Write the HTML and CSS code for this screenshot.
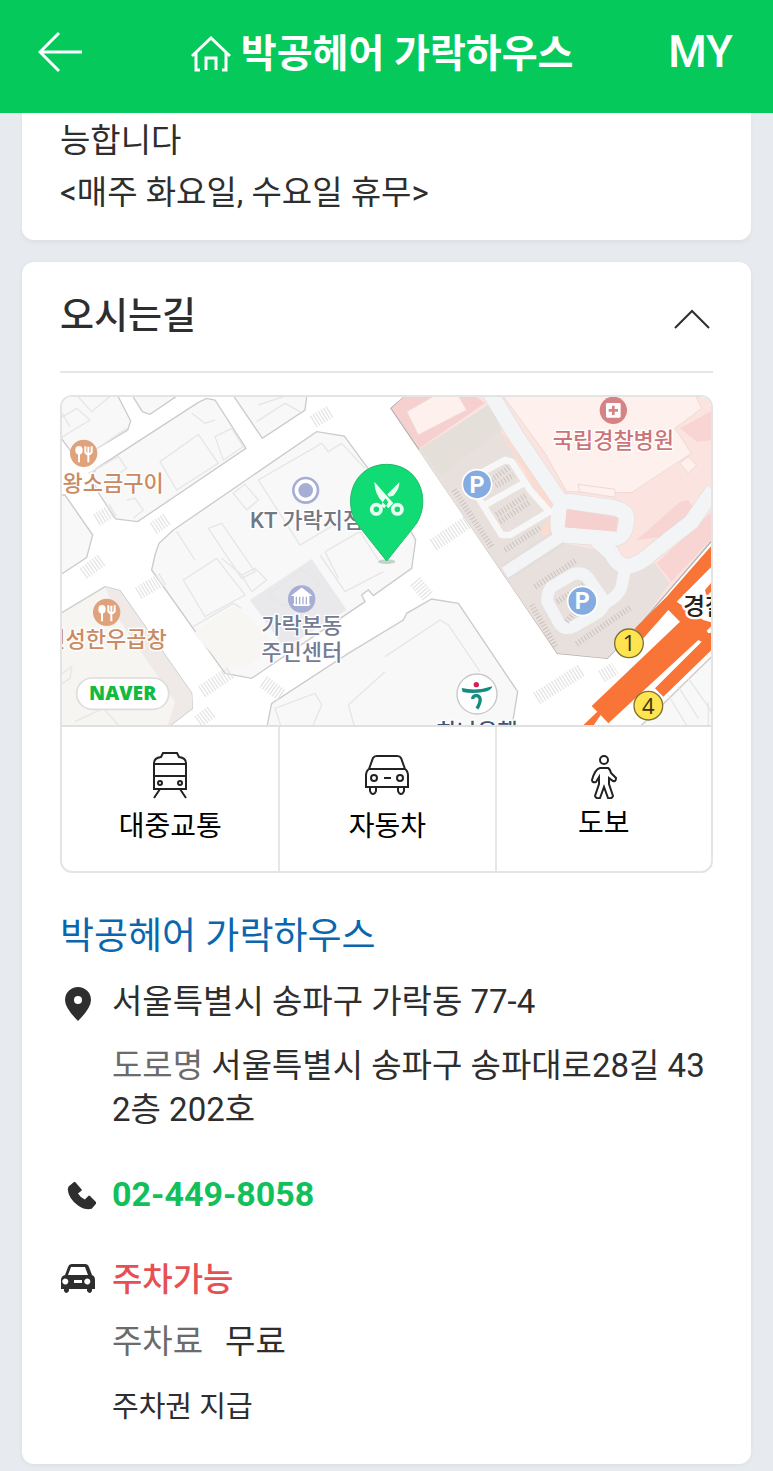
FILE: index.html
```html
<!DOCTYPE html>
<html lang="ko">
<head>
<meta charset="utf-8">
<meta name="viewport" content="width=device-width, initial-scale=1">
<title>박공헤어 가락하우스</title>
<link rel="stylesheet" href="styles.css">
</head>
<body>
<header class="topbar">
  <button class="back" type="button" aria-label="뒤로">
    <svg width="46" height="42" viewBox="0 0 46 42"><path d="M21 2 2 21l19 19M2 21h42"/></svg>
  </button>
  <h1 class="shop-title">
    <svg width="40" height="36" viewBox="0 0 40 36"><path d="M1 20 20 2l19 18M5 17v17h4M35 17v17h-4M15 34V22h10v12"/></svg>
    <span>박공헤어 가락하우스</span>
  </h1>
  <a class="my" href="#my">MY</a>
</header>

<main class="page">
  <section class="card notice">
    <p>능합니다</p>
    <p>&lt;매주 화요일, 수요일 휴무&gt;</p>
  </section>

  <section class="card location">
    <div class="section-head">
      <h2>오시는길</h2>
      <button class="fold" type="button" aria-label="접기">
        <svg width="36" height="20" viewBox="0 0 36 20"><path d="M1 19 18 2l17 17"/></svg>
      </button>
    </div>

    <div class="map-box">
      <svg class="map" viewBox="21 36 1947 984" preserveAspectRatio="xMidYMid slice" role="img" aria-label="지도">
        <rect class="road" x="0" y="0" width="2000" height="1050"/>
        <g class="block">
          <path d="M0 20H182L227 108L218 135L110 200L75 235L0 135Z"/>
          <path d="M225 20L262 80L285 88L385 20Z"/>
          <path d="M110 270L125 250L430 52L455 40L480 45L573 190L248 410L182 402L125 315Z"/>
          <path d="M527 20L622 160L750 75L757 20Z"/>
          <path d="M0 330H30L113 450L95 518L0 580Z"/>
          <path d="M290 555L300 510L312 475L355 435L785 140L868 153L935 245L1060 425L1082 465L1070 550L955 632L940 615L920 630L930 650L590 880L510 865Z"/>
          <path d="M635 1030L650 955L880 805L1045 705L1055 685L1130 642L1210 655L1388 920L1370 1030Z"/>
          <path d="M1750 1030L1975 810V1030Z"/>
        </g>
        <path class="block warm" d="M0 695L150 605L195 617L410 925L412 970L335 1030H0Z"/>
        <path class="warm-side" d="M150 605L195 617L410 925L412 970L335 1030L360 950L190 700Z"/>
        <path class="warm-fill" d="M415 745L540 660L620 735L665 790L560 850L510 850Z"/>
        <path class="hall-shade" d="M585 645L770 522L875 675L690 790Z"/>
        <g class="lines">
          <path d="M15 100L65 70L105 105L15 160M65 30L110 80L170 30M120 195L215 130M15 75L45 125M100 265L190 215L215 250L150 295M215 345L240 340L265 375L235 400M315 230L430 148L490 235L365 315ZM410 85L450 115L480 105M480 155L530 130L565 185L505 225ZM605 110L690 55L735 80M610 60L700 30M535 325L570 298L610 345L575 375ZM610 285L800 175L820 200L860 175L930 250M610 285L735 480L920 370M460 430L500 415L600 560L560 580ZM365 440L420 525M810 500L915 440L970 525"/>
          <path d="M385 585L485 520L570 630L450 695ZM500 520L560 570L600 550L635 585L590 620L560 570M415 725L535 655L560 670M640 630L740 550L795 600L690 665ZM795 510L870 620L985 560M810 500L850 580M680 1030L660 970L780 925L800 960L770 1030M900 1030L880 960L990 860M15 870L50 845L45 880L15 900M60 1010L145 970L190 1020M990 815L1155 705L1180 720L1275 860"/>
          <path d="M1840 930L1900 1030M1900 880L1970 980M1870 905L1930 1000M1960 950V1030"/>
        </g>

        <g transform="translate(1185 165)">
          <path class="hospital" d="M-177 -95L-120 -145H800V285L560 565L472 655L322 640Z"/>
          <path class="lot" d="M-95 30L120 -105L155 -25L215 90L300 210L300 300L440 330L520 400L615 370L660 430L560 565L472 655L322 640Z"/>
          <path class="greige" d="M-92 28L118 -108L155 -30L-28 106Z"/>
          <path class="rose" d="M-175 -95L-122 -145H60L105 -110L-92 25Z"/>
          <path class="pale" d="M-130 -85L-30 -142H20L50 -90L-95 -15Z"/>
          <path class="pale" d="M150 -145H730L755 -95L675 -35L724 40L545 158L350 155L285 40Z"/>
          <path class="rose-soft" d="M690 -35L790 -90V0L740 5ZM560 300L690 185L715 180L740 215L640 290ZM620 370L790 210V290L665 425Z"/>
          <path class="peach" d="M150 -25L245 55L320 180L300 205L270 170ZM270 270L300 230L310 290L285 300Z"/>
          <path class="pale" d="M385 133L495 148V172L388 155ZM690 70L715 50L740 75L715 100Z"/>
          <g class="street-edge">
            <path d="M115 -150L200 -10L335 190M790 150L725 245L610 335Q570 375 530 380Q500 375 485 340L440 300M165 398L330 290"/>
            <path d="M325 235Q325 182 360 185L490 203Q532 212 530 240Q525 295 490 295L345 285Q320 280 325 235Z"/>
          </g>
          <g class="street">
            <path d="M115 -150L200 -10L335 190M790 150L725 245L610 335Q570 375 530 380Q500 375 485 340L440 300"/>
            <path d="M325 235Q325 182 360 185L490 203Q532 212 530 240Q525 295 490 295L345 285Q320 280 325 235Z"/>
          </g>
          <path class="path" d="M165 398L330 290M525 385L515 440Q505 470 465 490"/>
          <path class="path" d="M305 440L370 402Q400 395 415 415L460 480Q465 505 440 520L370 560Q340 575 325 545L292 485Q290 455 305 440Z"/>
          <path class="rose" d="M350 207L503 232L500 275L344 262Z"/>
          <path class="lane" d="M80 165L155 285L180 285L298 215L240 150L185 65L165 60L90 100M105 195L220 130"/>
          <path class="bays" d="M125 120L180 80M138 137L190 105M140 225L230 165M150 245L240 185M165 330L275 260"/>
          <path class="bays" d="M12 150L125 320M255 440L380 360M245 495L320 625M380 612L545 500M322 485L400 435M350 545L375 515"/>
        </g>

        <g class="crossing">
          <path d="M125 405L175 375M295 430L340 400M775 110L825 80"/>
          <path d="M85 565L140 525M250 625L325 580M440 920L530 860M625 890L680 930M430 1010L470 980"/>
          <path d="M1135 480L1240 410M1080 590L1120 635M1445 940L1580 855M1640 875L1680 850"/>
        </g>

        <g transform="translate(1185 165)" class="subway">
          <path d="M795 305L650 470L555 565L580 595L655 510L690 545L425 798L442 815L390 865H425L452 825L475 850L745 600L755 605L615 745L640 770L795 620V575L775 580L770 572L795 548Z"/>
          <path class="white" d="M680 485L795 370V550L760 540Z"/>
          <path d="M765 450L795 415V490H775Z"/>
        </g>

        <g class="food"><circle cx="86" cy="205" r="41"/><path d="M72 205V232M100 185V232M91 184V202Q100 215 110 202V184"/><ellipse cx="72" cy="196" rx="11" ry="13"/></g>
        <g class="food" transform="translate(69 477)"><circle cx="86" cy="205" r="41"/><path d="M72 205V232M100 185V232M91 184V202Q100 215 110 202V184"/><ellipse cx="72" cy="196" rx="11" ry="13"/></g>
        <g class="place"><circle class="ring" cx="752" cy="316" r="37"/><circle cx="752" cy="316" r="22"/><circle cx="740" cy="642" r="41"/><path class="hall" d="M740 610L767 631H713ZM719 632H761V661H719ZM714 658H766"/><path class="columns" d="M724 635V658M734 635V658M744 635V658M754 635V658"/></g>
        <g class="cross"><circle cx="1675" cy="76" r="41"/><rect x="1653" y="54" width="44" height="44" rx="4"/><path d="M1675 62V90M1661 76H1689"/></g>

        <g class="label">
          <text class="brown" x="-38" y="317">왕왕소금구이</text>
          <text class="brown" x="-29" y="786">신성한우곱창</text>
          <text class="slate" x="585" y="430">KT 가락지점</text>
          <text class="navy" x="619" y="744">가락본동</text>
          <text class="navy" x="619" y="825">주민센터</text>
          <text class="red" x="1493" y="190">국립경찰병원</text>
          <text class="bank" x="1145" y="1062">하나은행</text>
          <text class="station" x="1884" y="690">경찰병원</text>
        </g>

        <g class="parking"><circle cx="1266" cy="298" r="44"/><text x="1266" y="323">P</text><circle cx="1582" cy="648" r="44"/><text x="1582" y="673">P</text></g>
        <g class="exit"><circle cx="1722" cy="775" r="43"/><text x="1722" y="799">1</text><circle cx="1780" cy="962" r="43"/><text x="1780" y="986">4</text></g>
        <g class="bank-logo" transform="translate(1125 825)"><circle cx="141" cy="102" r="60"/><path d="M95 84Q140 95 187 79Q184 93 160 96Q125 102 98 96Z"/><path class="hook" d="M128 117Q128 106 141 107Q160 112 141 146"/><circle class="dot" cx="139" cy="74" r="8"/></g>
        <g class="naver"><rect x="65" y="879" width="276" height="94" rx="47"/><text x="203" y="946">NAVER</text></g>

        <g transform="translate(855 210)">
          <ellipse class="pin-shadow" cx="140" cy="320" rx="26" ry="7"/>
          <path class="pin" d="M140 318L50 205C5 130 45 28 140 28S275 130 230 205Z"/>
          <g class="scissors"><path class="blade" d="M103 80L160 145L145 160L128 142Q104 118 103 80ZM178 82Q180 100 160 122L147 125L142 118ZM136 130L122 152L133 160L145 142Z"/><circle cx="109" cy="163" r="14"/><circle cx="172" cy="163" r="14"/></g>
        </g>
      </svg>

      <nav class="routes" aria-label="길찾기">
        <a href="#transit">
          <svg width="48" height="48" viewBox="0 0 48 48"><path d="M17 2h14l2 4q7 1 7 6v26H8V12q0-5 7-6ZM8 13h32M8 25h32M14 38 8 47M34 38l6 9"/><circle cx="14" cy="32" r="2"/><circle cx="34" cy="32" r="2"/></svg>
          <span>대중교통</span>
        </a>
        <a href="#car">
          <svg width="48" height="48" viewBox="0 0 48 48"><path d="M6 18 10 7q1-2 4-2h20q3 0 4 2l4 11M6 18h36q3 2 3 7v11H3V25q0-5 3-7ZM7 37v3q1 3 3 3t3-3v-3M35 37v3q1 3 3 3t3-3v-3M21 27h7"/><circle cx="11" cy="27" r="3"/><circle cx="37" cy="27" r="3"/></svg>
          <span>자동차</span>
        </a>
        <a class="walk" href="#walk">
          <svg width="48" height="48" viewBox="0 0 48 48"><circle cx="24" cy="9" r="4"/><path d="M20 17h8q2 1 3 5l5 5q0 4-3 3l-4-3v6l4 12q-1 3-5 2l-4-11-4 11q-4 1-5-2l4-12v-7l-3 5q-4 1-4-2 3-11 8-12Z"/></svg>
          <span>도보</span>
        </a>
      </nav>
    </div>

    <h3 class="name"><a href="#shop">박공헤어 가락하우스</a></h3>

    <div class="info address">
      <svg class="glyph" width="36" height="36" viewBox="0 0 36 36"><path fill-rule="evenodd" d="M18 1a13 13 0 0 1 13 13q0 8-13 21Q5 22 5 14A13 13 0 0 1 18 1Zm0 9a4 4 0 1 0 0 8 4 4 0 0 0 0-8Z"/></svg>
      <div>
        <p>서울특별시 송파구 가락동 77-4</p>
        <p class="road-address"><span class="muted">도로명</span> 서울특별시 송파구 송파대로28길 43 2층 202호</p>
      </div>
    </div>

    <div class="info phone">
      <svg class="glyph" width="36" height="36" viewBox="0 0 42 36"><path d="M10 7 16 2q1-1 2 0l7 8q1 1 0 2l-4 3q3 5 8 7l4-4q1-1 2 0l7 7q1 1 0 2l-5 6q-7 2-16-4Q10 21 9 10Z"/></svg>
      <a href="tel:024498058">02-449-8058</a>
    </div>

    <div class="info parking-info">
      <svg class="glyph" width="36" height="36" viewBox="0 0 36 36"><path fill-rule="evenodd" d="M5 14 8 6q1-3 4-3h13q3 0 4 3l3 8q3 1 3 5v9h-3v2q-2 4-5 0v-2H9v2q-3 4-5 0v-2H1v-9q0-4 4-5Zm6-8-3 8h20l-3-8ZM7 18a3 3 0 1 0 0 5 3 3 0 0 0 0-5Zm22 0a3 3 0 1 0 0 5 3 3 0 0 0 0-5ZM14 19v3h8v-3Z"/></svg>
      <div>
        <p class="available">주차가능</p>
        <p class="fee"><span class="muted">주차료</span><span>무료</span></p>
        <p class="ticket">주차권 지급</p>
      </div>
    </div>
  </section>
</main>
</body>
</html>
```

FILE: styles.css
```css
* { box-sizing: border-box; }

body {
  margin: 0;
  background: #e7ebef;
  color: #2e2e2e;
  font-family: Roboto, "Noto Sans CJK KR", sans-serif;
  font-size: 33px;
  line-height: 44px;
}

h1, h2, h3, p { margin: 0; }
a { color: inherit; text-decoration: none; }
button { padding: 0; border: 0; background: none; color: inherit; }
svg { display: block; flex: none; }

.topbar {
  display: flex;
  align-items: center;
  justify-content: space-between;
  padding: 0 40px 10px 38px;
  height: 113px;
  background: #05c95b;
  color: #fff;
}

.topbar svg, .fold svg, .routes svg {
  fill: none;
  stroke: currentColor;
  stroke-width: 3;
}

.back { padding-right: 12px; }

.shop-title {
  display: flex;
  align-items: center;
  gap: 10px;
  padding-top: 4px;
  font-size: 39px;
  font-weight: 700;
  line-height: 56px;
}

.my { font-size: 44px; font-weight: 500; }

.page { padding: 0 22px 6px; }

.card {
  border-radius: 12px;
  background: #fff;
  box-shadow: 0 1px 4px #d8dce1;
  padding: 0 38px;
}

.notice {
  border-top-left-radius: 0;
  border-top-right-radius: 0;
  box-shadow: 0 3px 4px #dde1e6;
  padding-bottom: 21px;
  padding-top: 2px;
  line-height: 52px;
}

.location { margin-top: 22px; padding-bottom: 35px; }

.section-head {
  display: flex;
  align-items: center;
  justify-content: space-between;
  height: 111px;
  border-bottom: 2px solid #e6e6e6;
}

.section-head h2 { font-size: 37px; font-weight: 500; }
.fold { padding: 4px 3px 0; }
.fold svg { stroke-width: 2; }

.map-box {
  margin-top: 22px;
  overflow: hidden;
  border: 2px solid #e4e4e4;
  border-radius: 12px;
}

.map { width: 100%; aspect-ratio: 649 / 328; }

.routes {
  display: grid;
  grid-template-columns: repeat(3, 1fr);
  border-top: 2px solid #e0e0e0;
  color: #000;
  font-size: 28px;
  line-height: 40px;
}

.routes a {
  display: flex;
  flex-direction: column;
  align-items: center;
  gap: 8px;
  padding: 24px 0 24px;
}

.routes a + a { border-left: 2px solid #e6e6e6; }
.routes .walk { gap: 5px; }
.routes svg { stroke: #222; stroke-width: 2; }

.name {
  margin-top: 37px;
  color: #0b66b0;
  font-size: 37px;
  font-weight: 400;
  line-height: 54px;
}

.info {
  display: grid;
  grid-template-columns: 36px 1fr;
  column-gap: 16px;
}

.glyph { fill: #2e2e2e; }
.address { margin-top: 16px; }
.address .glyph, .phone .glyph { margin-top: 6px; }
.parking-info .glyph { margin-top: 3px; }
.road-address { margin-top: 20px; }
.muted { color: #6b6b6b; }

.phone {
  margin-top: 40px;
  color: #11bf5b;
  font-size: 34px;
  font-weight: 700;
}

.parking-info { margin-top: 42px; }
.available { color: #e65054; font-weight: 500; }
.fee { display: flex; gap: 22px; margin-top: 18px; }
.ticket { margin-top: 21px; font-size: 29px; }

/* Map drawing */
.road { fill: #fff; }
.block { fill: #f8f8f8; stroke: #cbcbcb; stroke-width: 4; }
.warm { fill: #f7f5f2; }
.warm-side { fill: #efeae7; }
.warm-fill { fill: #f7f6f2; }
.hall-shade { fill: #e9e9eb; }
.lines { fill: none; stroke: #e6e6e6; stroke-width: 4; }
.hospital { fill: #fbe4e0; stroke: #b9b1ae; stroke-width: 4; }
.lot { fill: #e8e0dc; }
.greige { fill: #e5dfda; }
.rose { fill: #f5d0cf; }
.rose-soft { fill: #f8d4d3; }
.peach { fill: #fbdbd0; }
.pale { fill: #fdf0ed; stroke: #eed9d5; stroke-width: 3; }
.street, .street-edge, .path, .lane { fill: none; stroke-linejoin: round; }
.street-edge { stroke: #e3dddb; stroke-width: 50; }
.street { stroke: #f3f4f5; stroke-width: 46; }
.path { stroke: #f3f4f5; stroke-width: 36; }
.lane { stroke: #f7f7f7; stroke-width: 20; }
.bays { fill: none; stroke: #c8c2be; stroke-width: 18; stroke-dasharray: 3 7; }
.crossing { fill: none; stroke: #e5e5e5; stroke-width: 40; stroke-dasharray: 4 5; }
.subway { fill: #f87537; }
.subway .white { fill: #fff; }
.food circle { fill: #dfa27a; }
.food path { fill: none; stroke: #fff; stroke-width: 6; }
.food ellipse { fill: #fff; }
.place circle { fill: #a6aed6; }
.place .ring { fill: #fff; stroke: #a6aed6; stroke-width: 8; }
.place .hall { fill: #fff; stroke: #fff; stroke-width: 4; }
.place .columns { stroke: #a6aed6; stroke-width: 4; }
.cross circle { fill: #d68386; }
.cross rect { fill: #fff; }
.cross path { stroke: #d68386; stroke-width: 8; }

.label {
  font-size: 66px;
  font-weight: 500;
  stroke: #fff;
  stroke-width: 8;
  stroke-linejoin: round;
  paint-order: stroke;
}

.brown { fill: #c98a64; }
.slate { fill: #727783; }
.navy { fill: #747b92; }
.red { fill: #cc7478; }
.bank { fill: #3e5573; }
.station { fill: #222; font-size: 72px; stroke-width: 14; }

.parking, .exit, .naver { text-anchor: middle; }
.parking circle { fill: #85ace0; stroke: #fff; stroke-width: 5; }
.parking text { fill: #fff; font-size: 70px; font-weight: 700; }
.exit circle { fill: #ffe34f; stroke: #7b7138; stroke-width: 4; }
.exit text { fill: #3a3213; font-family: "Open Sans", sans-serif; font-size: 66px; font-weight: 500; }
.bank-logo circle { fill: #fff; stroke: #c7c7c7; stroke-width: 4; }
.bank-logo path { fill: #148c82; }
.bank-logo .hook { fill: none; stroke: #148c82; stroke-width: 10; }
.bank-logo .dot { fill: #d32256; stroke: none; }
.naver rect { fill: #fff; stroke: #ddd; stroke-width: 5; }
.naver text { fill: #10bb40; font-family: "Open Sans", sans-serif; font-size: 58px; font-weight: 800; }
.pin { fill: #10db74; stroke: #23b968; stroke-width: 3; }
.pin-shadow { fill: #c5d2ca; }
.scissors { fill: none; stroke: #e9fff2; stroke-width: 11; }
.scissors .blade { fill: #e9fff2; stroke: none; }
```
